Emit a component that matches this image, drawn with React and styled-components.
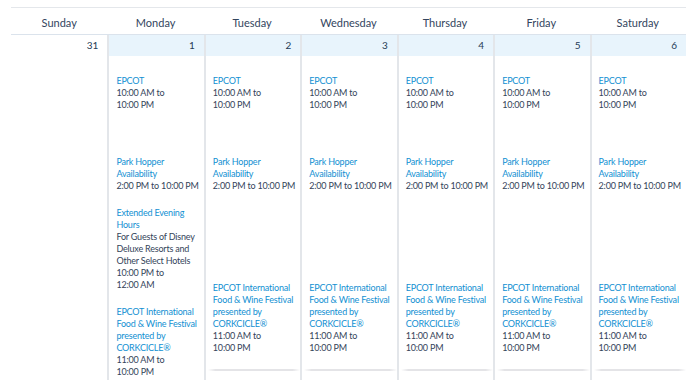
import React from "react";
import styled, { createGlobalStyle } from "styled-components";

const GlobalStyle = createGlobalStyle`
  body {
    margin: 0;
    background: #fff;
    font-family: Lato, "Open Sans", sans-serif;
    color: #253b56;
  }
`;

const Calendar = styled.div`
  margin: 7px 0 0 11px;
  width: 675px;
  border-top: 1px solid #e4e7eb;
`;

const HeadRow = styled.div`
  display: grid;
  grid-template-columns: repeat(7, 1fr);
  height: 26px;
  border-bottom: 1px solid #dbe3ec;
`;

const DayName = styled.div`
  text-align: center;
  font-size: 11px;
  line-height: 12px;
  padding-top: 9px;
  color: #33455e;
`;

const Body = styled.div`
  display: grid;
  grid-template-columns: repeat(7, 1fr);
  height: 345px;
  overflow: hidden;
`;

const Cell = styled.div`
  border-left: ${(p) => (p.$first ? "none" : "2px solid #e3e6ea")};
  min-width: 0;
`;

const DateBar = styled.div`
  height: 21px;
  background: ${(p) => (p.$current ? "#e8f4fc" : "#fff")};
  text-align: right;
  padding-right: 9px;
  font-size: 10px;
  line-height: 20px;
  color: #253b56;
`;

const Events = styled.div`
  padding: 19px 0 0 7px;
`;

const Event = styled.div`
  margin-top: ${(p) => p.$gap || 0}px;
  font-size: 9px;
  line-height: 12px;
  letter-spacing: -0.2px;
  white-space: nowrap;
`;

const Title = styled.div`
  color: #1290d2;
`;

const Detail = styled.div`
  color: #34445a;
`;

const Divider = styled.div`
  margin-top: 15px;
  height: 2px;
  margin-left: -5px;
  background: linear-gradient(
    to right,
    rgba(225, 225, 228, 0),
    #e4e4e7 8%,
    #e4e4e7 92%,
    rgba(225, 225, 228, 0)
  );
`;

const days = ["Sunday", "Monday", "Tuesday", "Wednesday", "Thursday", "Friday", "Saturday"];

const epcot = { title: ["EPCOT"], detail: ["10:00 AM to", "10:00 PM"] };
const hopper = { title: ["Park Hopper", "Availability"], detail: ["2:00 PM to 10:00 PM"], gap: 45 };
const extended = {
  title: ["Extended Evening", "Hours"],
  detail: ["For Guests of Disney", "Deluxe Resorts and", "Other Select Hotels", "10:00 PM to", "12:00 AM"],
  gap: 15,
};
const festival = {
  title: ["EPCOT International", "Food & Wine Festival", "presented by", "CORKCICLE®"],
  detail: ["11:00 AM to", "10:00 PM"],
};

const cells = [
  { date: "31", events: [] },
  { date: "1", events: [epcot, hopper, extended, { ...festival, gap: 15 }] },
  ...[2, 3, 4, 5, 6].map((d) => ({
    date: String(d),
    events: [epcot, hopper, { ...festival, gap: 90 }],
    divider: true,
  })),
];

const App = () => {
  return (
    <>
      <GlobalStyle />
      <Calendar>
        <HeadRow>
          {days.map((d) => (
            <DayName key={d}>{d}</DayName>
          ))}
        </HeadRow>
        <Body>
          {cells.map((c, i) => (
            <Cell key={c.date} $first={i === 0}>
              <DateBar $current={i > 0}>{c.date}</DateBar>
              {c.events.length > 0 && (
                <Events>
                  {c.events.map((e, j) => (
                    <Event key={j} $gap={e.gap}>
                      {e.title.map((t) => (
                        <Title key={t}>{t}</Title>
                      ))}
                      {e.detail.map((t) => (
                        <Detail key={t}>{t}</Detail>
                      ))}
                    </Event>
                  ))}
                  {c.divider && <Divider />}
                </Events>
              )}
            </Cell>
          ))}
        </Body>
      </Calendar>
    </>
  );
};

export default App;
